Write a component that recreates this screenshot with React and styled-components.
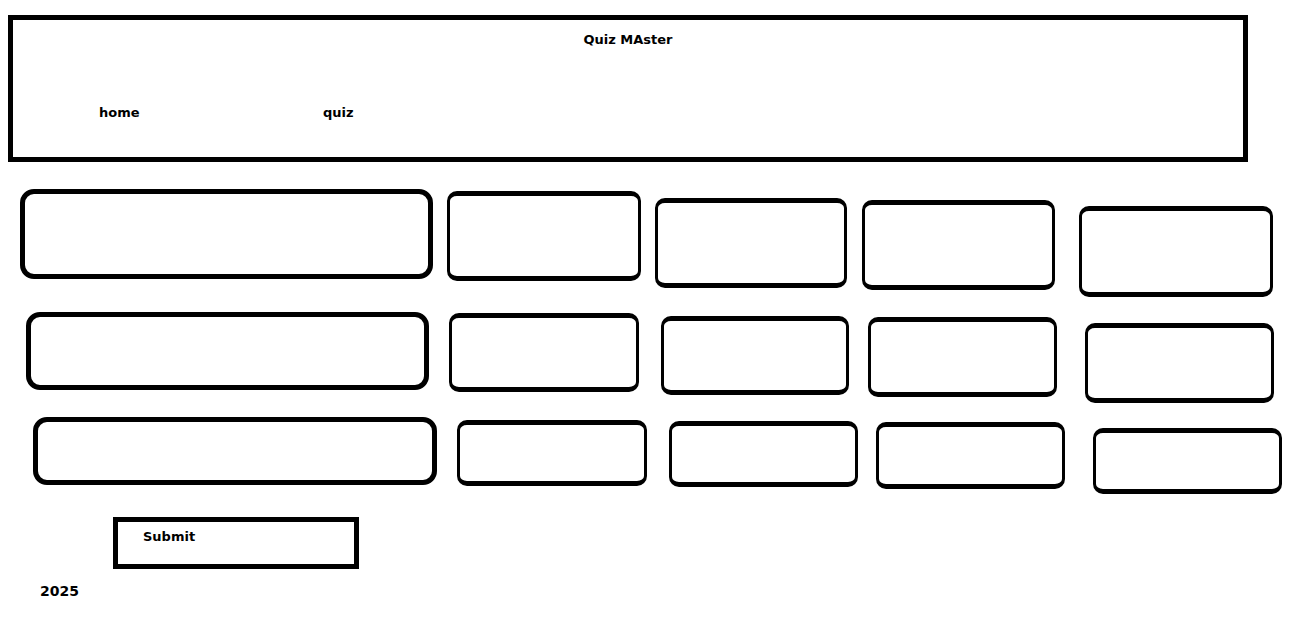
import React from 'react';
import styled, { createGlobalStyle } from 'styled-components';

const GlobalStyle = createGlobalStyle`
  body {
    margin: 0;
    background: #fff;
    font-family: "DejaVu Sans", "Liberation Sans", sans-serif;
    color: #000;
  }
`;

const Page = styled.div`
  display: flex;
  flex-direction: column;
  align-items: flex-start;
  padding-top: 15px;
`;

const Header = styled.header`
  box-sizing: border-box;
  width: 1240px;
  height: 147px;
  margin-left: 8px;
  border: 5px solid #000;
  padding-top: 12px;
`;

const Title = styled.h1`
  margin: 0;
  text-align: center;
  font-size: 13px;
  line-height: 16px;
  font-weight: 700;
`;

const Nav = styled.nav`
  display: flex;
  margin-top: 57px;
  padding-left: 86px;
`;

const NavItem = styled.a`
  width: 224px;
  font-size: 13px;
  line-height: 16px;
  font-weight: 700;
  color: #000;
  text-decoration: none;
`;

const Grid = styled.section`
  display: flex;
  flex-direction: column;
  margin-top: 27px;
`;

const Row = styled.div`
  display: flex;
  align-items: flex-start;
  margin-top: ${p => p.$gap}px;
`;

const Option = styled.div`
  box-sizing: border-box;
  flex: none;
  width: ${p => p.$w}px;
  height: ${p => p.$h}px;
  margin-left: ${p => p.$ml}px;
  margin-top: ${p => p.$dy}px;
  border: solid #000;
  border-width: ${p => (p.$wide ? '5px' : '5px 3px')};
  border-radius: ${p => (p.$wide ? '14px' : '10px')};
`;

const SubmitButton = styled.button`
  box-sizing: border-box;
  display: flex;
  align-items: flex-start;
  width: 246px;
  height: 52px;
  margin: 23px 0 0 113px;
  padding: 7px 0 0 25px;
  border: 5px solid #000;
  background: #fff;
  font-family: inherit;
  font-size: 13px;
  line-height: 16px;
  font-weight: 700;
  color: #000;
`;

const Footer = styled.footer`
  margin: 14px 0 0 40px;
  font-size: 14px;
  line-height: 16px;
  font-weight: 700;
`;

const rows = [
  {
    gap: 0,
    boxes: [
      { ml: 20, dy: 0, w: 413, h: 90, wide: true },
      { ml: 14, dy: 2, w: 194, h: 90 },
      { ml: 14, dy: 9, w: 192, h: 90 },
      { ml: 15, dy: 11, w: 193, h: 90 },
      { ml: 24, dy: 17, w: 194, h: 91 }
    ]
  },
  {
    gap: 15,
    boxes: [
      { ml: 26, dy: 0, w: 403, h: 78, wide: true },
      { ml: 20, dy: 1, w: 190, h: 79 },
      { ml: 22, dy: 4, w: 188, h: 79 },
      { ml: 19, dy: 5, w: 189, h: 80 },
      { ml: 28, dy: 11, w: 189, h: 80 }
    ]
  },
  {
    gap: 14,
    boxes: [
      { ml: 33, dy: 0, w: 404, h: 68, wide: true },
      { ml: 20, dy: 3, w: 190, h: 66 },
      { ml: 22, dy: 4, w: 189, h: 66 },
      { ml: 18, dy: 5, w: 189, h: 67 },
      { ml: 28, dy: 11, w: 189, h: 66 }
    ]
  }
];

export default function App() {
  return (
    <Page>
      <GlobalStyle />
      <Header>
        <Title>Quiz MAster</Title>
        <Nav>
          <NavItem href="#">home</NavItem>
          <NavItem href="#">quiz</NavItem>
        </Nav>
      </Header>

      <Grid>
        {rows.map((row, i) => (
          <Row key={i} $gap={row.gap}>
            {row.boxes.map((b, j) => (
              <Option
                key={j}
                $ml={b.ml}
                $dy={b.dy}
                $w={b.w}
                $h={b.h}
                $wide={b.wide}
              />
            ))}
          </Row>
        ))}
      </Grid>

      <SubmitButton>Submit</SubmitButton>
      <Footer>2025</Footer>
    </Page>
  );
}
